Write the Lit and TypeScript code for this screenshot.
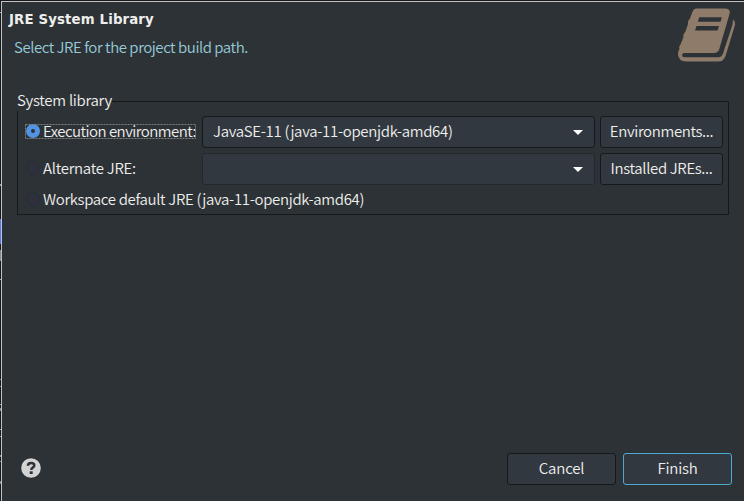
import { LitElement, html, css, svg } from "lit";
import { customElement, property } from "lit/decorators.js";

const bookIcon = html`<svg width="58" height="56" viewBox="677 7 58 56" aria-hidden="true">
  <path fill="#8e7b69" fill-rule="evenodd" d="M696 8.500H725Q731 8.500 729.500 14L719 50Q717.500 53 714 53H684.500Q682 53 682 55Q682 57.200 684.500 57.200H718Q722 57.200 723.200 53L732.500 24.500L733 19.500Q735.500 21.500 735 25L725.500 56Q723.500 61.500 718.500 61.500H686Q678.500 61 678 54.500Q677.700 51.500 679.500 49Q678.500 47 680.500 44.500L683.500 37Q682.800 34.500 685.500 31.500L688 24Q687.500 21 690 18.500L692 13Q693 9 696 8.500ZM699.200 17.200L697.800 21.800H720.500L721.800 17.200ZM696.500 26L695 30.500H717.500L719 26Z"/>
</svg>`;

const helpIcon = html`<svg width="20" height="20" viewBox="0 0 20 20" aria-hidden="true">
  <circle cx="10" cy="10" r="9.800" fill="#d3d3d3"/>
  <path d="M6.900 7.800Q7 5 10.100 5Q13.300 5 13.300 7.500Q13.300 8.800 11.700 9.700Q10.300 10.500 10.300 12" fill="none" stroke="#2d3236" stroke-width="2.500"/>
  <rect x="8.700" y="13.300" width="3" height="2.700" fill="#2d3236"/>
</svg>`;

@customElement("radio-option")
class RadioOption extends LitElement {
  static styles = css`
    :host { display: flex; align-items: center; width: max-content; }
    .option { display: flex; align-items: center; height: 15px; position: relative; white-space: nowrap; }
    .dot { width: 14px; height: 14px; margin-right: 3px; flex: none; align-self: flex-start; }
    .text { padding-bottom: 2px; }
    .focus { position: absolute; left: -1px; top: 0; }
    .focus rect { fill: none; stroke: #7c8082; stroke-dasharray: 2 1; }
  `;
  @property() label = "";
  @property({ type: Boolean }) checked = false;
  render() {
    return html`<span class="option" role="radio" aria-checked=${this.checked}>
      <svg class="dot" viewBox="0 0 14 14">
        ${this.checked
          ? svg`<circle cx="7" cy="7" r="7" fill="#5294e2"/><circle cx="7" cy="7" r="2" fill="#2b3039"/>`
          : svg`<circle cx="7" cy="7" r="6.300" fill="#2e313d" stroke="#292d38"/>`}
      </svg><span class="text">${this.label}</span>
      ${this.checked ? html`<svg class="focus" width="172" height="15"><rect x=".5" y=".5" width="170" height="14"/></svg>` : ""}
    </span>`;
  }
}

@customElement("combo-box")
class ComboBox extends LitElement {
  static styles = css`
    :host { display: block; }
    .combo { box-sizing: border-box; height: 32px; border: 1px solid #15191c; border-radius: 3px; background: #32383f;
      display: flex; align-items: center; justify-content: space-between; padding: 0 11px 0 10px; white-space: nowrap; }
    .off { border-color: #23282d; }
    .value { padding-bottom: 2px; letter-spacing: -.32px; }
  `;
  @property() value = "";
  @property({ type: Boolean }) disabled = false;
  render() {
    return html`<div class="combo ${this.disabled ? "off" : ""}"><span class="value">${this.value}</span>
      <svg width="10" height="5" viewBox="0 0 10 5"><path d="M0 0H10L5 5Z" fill="#fff"/></svg></div>`;
  }
}

@customElement("app-root")
class AppRoot extends LitElement {
  static styles = css`
    :host { display: block; width: 744px; height: 501px; overflow: hidden; font: 350 15px/20px "Noto Sans CJK SC", sans-serif; letter-spacing: -.28px; color: #eeeeec; }
    .screen { box-sizing: border-box; height: 501px; padding: 1px 0 0 1px;
      background: linear-gradient(#17181b 0 0) 0 0/100% 1px no-repeat,
        linear-gradient(#17181b 0 12px, #aaa 12px 13px, #17181b 13px 184px, #999 184px 186px, #17181b 186px 219px, #5876f5 219px 244px, #17181b 244px 250px, #888 250px 261px, #17181b 261px 279px, #aaa 279px 280px, #17181b 280px 379px, #777 379px 380px, #17181b 380px 386px, #777 386px 387px, #17181b 387px 404px, #999 404px 405px, #17181b 405px 408px, #888 408px 411px, #17181b 411px 429px, #999 429px 430px, #17181b 430px 436px, #888 436px 437px, #17181b 437px 455px, #888 455px 457px, #17181b 457px 461px, #888 461px 462px, #17181b 462px 481px, #888 481px 484px, #17181b 484px); }
    .dialog { box-sizing: border-box; height: 500px; border: solid #c2c2c2; border-width: 1px 0 0 1px; background: #2d3236;
      display: flex; flex-direction: column; }
    header { display: flex; justify-content: space-between; height: 90px; padding: 5px 9px 0 7px; box-sizing: border-box; }
    h1 { margin: 3px 0 0; font: bold 13.33px/20px "DejaVu Sans", sans-serif; letter-spacing: .13px; }
    p { margin: 7px 0 0 5px; color: #97cbd8; letter-spacing: -.46px; }
    fieldset { margin: 0 15px; padding: 0 5px 0 7px; height: 123px; box-sizing: border-box; border: 1px solid #15191c; min-width: 0; width: 712px; }
    legend { margin-left: -8px; padding: 0; height: 19px; line-height: 15px; }
    .rows { display: grid; grid-template-columns: 172px 393px 123px; column-gap: 5px; row-gap: 5px; align-items: center; margin-top: 5px; }
    .rows radio-option { margin: 0 0 1px 1px; }
    .rows .first { letter-spacing: -.53px; }
    .rows .button { letter-spacing: -.36px; }
    .rows .wide { grid-column: 1 / -1; height: 19px; margin-bottom: 0; letter-spacing: -.34px; }
    .button { box-sizing: border-box; height: 32px; border: 1px solid #15191c; border-radius: 3px; background: #32383f;
      display: flex; align-items: center; justify-content: center; white-space: nowrap; padding-bottom: 2px; }
    footer { margin-top: auto; height: 48px; display: flex; padding: 0 12px 0 19px; align-items: flex-start; }
    .help { margin: 5px auto 0 0; height: 20px; }
    .help svg, header svg { display: block; }
    footer .button { width: 109px; margin-left: 7px; letter-spacing: -.2px; }
    .primary { border-color: #4fa8cf; }
  `;
  render() {
    return html`<div class="screen"><main class="dialog">
      <header><div><h1>JRE System Library</h1><p>Select JRE for the project build path.</p></div>${bookIcon}</header>
      <fieldset><legend>System library</legend>
        <div class="rows">
          <radio-option class="first" label="Execution environment:" checked></radio-option>
          <combo-box value="JavaSE-11 (java-11-openjdk-amd64)"></combo-box>
          <div class="button">Environments...</div>
          <radio-option label="Alternate JRE:"></radio-option>
          <combo-box disabled></combo-box>
          <div class="button">Installed JREs...</div>
          <radio-option class="wide" label="Workspace default JRE (java-11-openjdk-amd64)"></radio-option>
        </div>
      </fieldset>
      <footer><div class="help">${helpIcon}</div><div class="button">Cancel</div><div class="button primary">Finish</div></footer>
    </main></div>`;
  }
}
